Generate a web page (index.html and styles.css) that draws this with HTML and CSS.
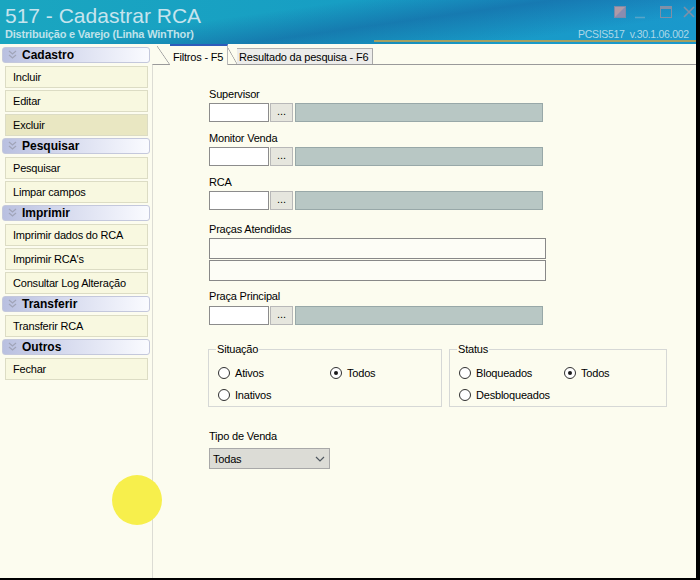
FILE: index.html
```html
<!DOCTYPE html>
<html lang="pt-BR">
  <head>
    <meta charset="UTF-8" />
    <title>517 - Cadastrar RCA</title>
    <link rel="stylesheet" href="styles.css">
  </head>
  <body>
    <div class="window">
      <header class="titlebar">
        <div class="title-text">
          <h1>517 - Cadastrar RCA</h1>
          <div class="subtitle">Distribuição e Varejo (Linha WinThor)</div>
        </div>
        <div class="title-right">
          <svg class="win-icons" width="82" height="14" viewBox="0 0 82 14">
            <!-- restore / minimize / maximize / close -->
            <rect x="0.5" y="0.5" width="11" height="11" fill="#8a8cb0" stroke="#7f8aa8" />
            <polygon points="1,1 11,1 1,11" fill="#b09aa6" />
            <line x1="21" y1="11.5" x2="31" y2="11.5" stroke="#58a4c8" stroke-width="1.5" />
            <rect x="46.5" y="0.5" width="11" height="11" fill="none" stroke="#7f90a8" />
            <line x1="46" y1="2" x2="58" y2="2" stroke="#7f90a8" stroke-width="2" />
            <path d="M70 1 L80 11 M80 1 L70 11" stroke="#7f90a8" stroke-width="1.6" />
          </svg>
          <div class="version">PCSIS517&nbsp; v.30.1.06.002</div>
        </div>
      </header>

      <div class="workspace">
        <nav class="sidebar">
          <div class="group-head">
            <svg class="chev" width="9" height="10" viewBox="0 0 9 10"><path d="M1 1 L4.5 4 L8 1 M1 5 L4.5 8 L8 5" fill="none" stroke="#a0a4b8" stroke-width="1.2" /></svg>
            Cadastro
          </div>
          <div class="item">Incluir</div>
          <div class="item">Editar</div>
          <div class="item hover">Excluir</div>

          <div class="group-head">
            <svg class="chev" width="9" height="10" viewBox="0 0 9 10"><path d="M1 1 L4.5 4 L8 1 M1 5 L4.5 8 L8 5" fill="none" stroke="#a0a4b8" stroke-width="1.2" /></svg>
            Pesquisar
          </div>
          <div class="item">Pesquisar</div>
          <div class="item">Limpar campos</div>

          <div class="group-head">
            <svg class="chev" width="9" height="10" viewBox="0 0 9 10"><path d="M1 1 L4.5 4 L8 1 M1 5 L4.5 8 L8 5" fill="none" stroke="#a0a4b8" stroke-width="1.2" /></svg>
            Imprimir
          </div>
          <div class="item">Imprimir dados do RCA</div>
          <div class="item">Imprimir RCA's</div>
          <div class="item">Consultar Log Alteração</div>

          <div class="group-head">
            <svg class="chev" width="9" height="10" viewBox="0 0 9 10"><path d="M1 1 L4.5 4 L8 1 M1 5 L4.5 8 L8 5" fill="none" stroke="#a0a4b8" stroke-width="1.2" /></svg>
            Transferir
          </div>
          <div class="item">Transferir RCA</div>

          <div class="group-head">
            <svg class="chev" width="9" height="10" viewBox="0 0 9 10"><path d="M1 1 L4.5 4 L8 1 M1 5 L4.5 8 L8 5" fill="none" stroke="#a0a4b8" stroke-width="1.2" /></svg>
            Outros
          </div>
          <div class="item">Fechar</div>
        </nav>

        <main class="panel">
          <div class="tabs">
            <div class="tab active">Filtros - F5</div>
            <div class="tab">Resultado da pesquisa - F6</div>
          </div>

          <div class="tab-body">
            <div class="field">
              <label>Supervisor</label>
              <div class="lookup">
                <input class="code" type="text" />
                <button class="dots">...</button>
                <div class="desc"></div>
              </div>
            </div>

            <div class="field">
              <label>Monitor Venda</label>
              <div class="lookup">
                <input class="code" type="text" />
                <button class="dots">...</button>
                <div class="desc"></div>
              </div>
            </div>

            <div class="field">
              <label>RCA</label>
              <div class="lookup">
                <input class="code" type="text" />
                <button class="dots">...</button>
                <div class="desc"></div>
              </div>
            </div>

            <div class="field pracas">
              <label>Praças Atendidas</label>
              <div class="box"></div>
              <div class="box"></div>
            </div>

            <div class="field principal">
              <label>Praça Principal</label>
              <div class="lookup">
                <input class="code" type="text" />
                <button class="dots">...</button>
                <div class="desc"></div>
              </div>
            </div>

            <div class="groups">
              <fieldset class="group situacao">
                <legend>Situação</legend>
                <div class="radios">
                  <span class="opt"><span class="radio"></span>Ativos</span>
                  <span class="opt"><span class="radio on"></span>Todos</span>
                  <span class="opt"><span class="radio"></span>Inativos</span>
                </div>
              </fieldset>
              <fieldset class="group status">
                <legend>Status</legend>
                <div class="radios">
                  <span class="opt"><span class="radio"></span>Bloqueados</span>
                  <span class="opt"><span class="radio on"></span>Todos</span>
                  <span class="opt"><span class="radio"></span>Desbloqueados</span>
                </div>
              </fieldset>
            </div>

            <div class="field tipo">
              <label>Tipo de Venda</label>
              <div class="combo">
                <span>Todas</span>
                <svg width="10" height="6" viewBox="0 0 10 6"><path d="M1 1 L5 5 L9 1" fill="none" stroke="#505860" stroke-width="1.2" /></svg>
              </div>
            </div>
          </div>
        </main>
      </div>

      <div class="cursor-dot"></div>
    </div>
  </body>
</html>
```

FILE: styles.css
```css
body {
  margin: 0;
  background: #000;
  font-family: "Liberation Sans", Arial, sans-serif;
  font-size: 11px;
  letter-spacing: -0.2px;
  color: #000;
}
.window {
  position: relative;
  width: 696px;
  height: 578px;
  overflow: hidden;
  background: #fcfcef;
}

/* title bar */
.titlebar {
  position: relative;
  height: 44px;
  display: flex;
  justify-content: space-between;
  background:
    linear-gradient(172deg, rgba(10, 70, 140, 0) 0%, rgba(10, 70, 140, 0) 35%, rgba(20, 80, 150, 0.45) 55%, rgba(10, 70, 140, 0) 80%),
    linear-gradient(to right, #1aa6c0 0%, #179ec4 50%, #1a98cc 100%);
}
.titlebar::after {
  content: "";
  position: absolute;
  left: 374px;
  right: 0;
  bottom: 2px;
  height: 2px;
  background: #a4a062;
}
.title-text {
  padding: 3px 0 0 5px;
}
h1 {
  margin: 0;
  font-size: 21px;
  font-weight: normal;
  letter-spacing: 0;
  line-height: 25px;
  color: #c6e4ee;
}
.subtitle {
  font-weight: bold;
  font-size: 11px;
  line-height: 13px;
  color: #bfe2ea;
}
.title-right {
  width: 118px;
  display: flex;
  flex-direction: column;
  align-items: flex-end;
  padding-top: 6px;
  box-sizing: border-box;
}
.version {
  width: 118px;
  margin-top: 8px;
  white-space: nowrap;
  font-size: 10.5px;
  letter-spacing: -0.3px;
  color: #acd8e8;
  line-height: 13px;
}

.workspace {
  display: flex;
  height: 534px;
}

/* left menu */
.sidebar {
  width: 150px;
  padding: 3px 0 0 2px;
  box-sizing: border-box;
}
.group-head {
  height: 16px;
  box-sizing: border-box;
  display: flex;
  align-items: center;
  gap: 5px;
  padding-left: 5px;
  margin-bottom: 3px;
  font-weight: bold;
  font-size: 12px;
  letter-spacing: 0;
  border: 1px solid #c4c8dc;
  border-radius: 3px;
  background: linear-gradient(to right, #b9c0e0 0%, #d8dcef 45%, #fafbff 100%);
}
.item {
  height: 22px;
  box-sizing: border-box;
  margin: 0 2px 2px 3px;
  padding-left: 7px;
  line-height: 20px;
  border: 1px solid #dcdcc4;
  background: #f8f8e0;
}
.item.hover {
  background: #e9e7c2;
}

/* tabs */
.panel {
  flex: 1;
  display: flex;
  flex-direction: column;
  padding-left: 2px;
}
.tabs {
  height: 20px;
  display: flex;
  align-items: flex-end;
  padding-left: 18px;
}
.tab {
  position: relative;
  height: 16px;
  line-height: 16px;
  padding: 0 4px 0 2px;
  margin-left: 9px;
  border-top: 1px solid #b0b0b0;
  border-right: 1px solid #a8a8a8;
  background: #ececea;
  box-sizing: border-box;
}
.tab::before {
  content: "";
  position: absolute;
  left: -9px;
  top: -1px;
  bottom: 0;
  width: 9px;
  background: linear-gradient(to top right, transparent calc(50% - 0.7px), #a0a0a0 50%, transparent calc(50% + 0.7px));
}
.tab.active {
  width: 58px;
  height: 21px;
  margin-left: 0;
  margin-bottom: -1px;
  padding: 3px 0 0 3px;
  line-height: 16px;
  border-top: 2px solid #2e5cba;
  border-right: 1px solid #b8b8b8;
  background: #fcfcef;
  z-index: 1;
}
.tab.active::before {
  left: -13px;
  width: 13px;
  top: 0;
}
.tab-body {
  flex: 1;
  border-top: 1px solid #9a9a9a;
  border-left: 1px solid #dcdcd4;
  padding: 21px 0 0 56px;
}

/* form fields */
.field label {
  display: block;
  height: 16px;
  line-height: 16px;
  margin-bottom: 1px;
}
.field {
  margin-bottom: 8px;
}
.lookup {
  display: flex;
  height: 19px;
}
.code {
  width: 60px;
  height: 19px;
  box-sizing: border-box;
  margin: 0;
  padding: 0;
  border: 1px solid #8c8c8c;
  background: #fff;
}
.dots {
  width: 23px;
  height: 19px;
  margin: 0 0 0 1px;
  padding: 0 0 3px;
  font-family: "Liberation Sans", Arial, sans-serif;
  font-size: 11px;
  border: 1px solid #b8b8b8;
  background: #e6e6de;
  cursor: pointer;
}
.desc {
  width: 248px;
  height: 19px;
  box-sizing: border-box;
  margin-left: 2px;
  border: 1px solid #98a8a8;
  background: #b8c7c4;
}
.pracas {
  margin-top: 11px;
  margin-bottom: 7px;
}
.principal label {
  margin-bottom: 2px;
}
.box {
  width: 337px;
  height: 21px;
  box-sizing: border-box;
  margin-bottom: 1px;
  border: 1px solid #888;
  background: #fdfdf6;
}

/* option groups */
.groups {
  display: flex;
  gap: 7px;
  margin-top: 18px;
  margin-left: -1px;
}
.group {
  margin: 0;
  height: 64px;
  box-sizing: border-box;
  padding: 10px 0 0 9px;
  border: 1px solid #d6d8d6;
}
.group legend {
  padding: 0 1px;
  margin-left: -2px;
  line-height: 13px;
}
.situacao {
  width: 234px;
}
.status {
  width: 218px;
}
.radios {
  display: grid;
  row-gap: 9px;
}
.situacao .radios {
  grid-template-columns: 112px auto;
}
.status .radios {
  grid-template-columns: 105px auto;
}
.opt {
  display: flex;
  align-items: center;
  gap: 5px;
  height: 13px;
}
.radio {
  position: relative;
  width: 12px;
  height: 12px;
  box-sizing: border-box;
  border: 1px solid #303030;
  border-radius: 50%;
  background: #fff;
}
.radio.on::after {
  content: "";
  position: absolute;
  left: 3px;
  top: 3px;
  width: 4px;
  height: 4px;
  border-radius: 50%;
  background: #1a1a1a;
}

.tipo {
  margin-top: 21px;
}
.tipo label {
  margin-bottom: 4px;
}
.combo {
  width: 121px;
  height: 21px;
  box-sizing: border-box;
  display: flex;
  align-items: center;
  justify-content: space-between;
  padding: 0 4px 0 3px;
  border: 1px solid #a8a8a8;
  background: #dcdcd6;
  font-size: 11px;
}

/* cursor highlight */
.cursor-dot {
  position: absolute;
  left: 112px;
  top: 475px;
  width: 50px;
  height: 50px;
  border-radius: 50%;
  background: #f7ef4c;
}
```
